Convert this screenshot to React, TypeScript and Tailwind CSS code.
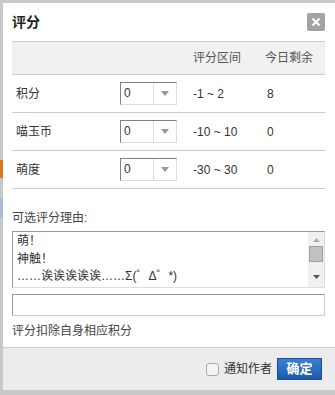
import React from 'react';

const rows = [
  { name: '积分', range: '-1 ~ 2', left: '8' },
  { name: '喵玉币', range: '-10 ~ 10', left: '0' },
  { name: '萌度', range: '-30 ~ 30', left: '0' },
];

const reasons = ['萌！', '神触！', '……诶诶诶诶诶……Σ(゜Δ゜*)'];

const Select = () => (
  <div className="flex h-[23px] w-[57px] border border-[#ddd] border-t-[#808080] border-l-[#808080] bg-white">
    <div className="flex-1 pl-[3px] leading-[21px] text-[#333]">0</div>
    <div className="flex w-[23px] items-center justify-center border-l border-[#ddd]">
      <svg width="8" height="5" viewBox="0 0 8 5">
        <path d="M0 0h8L4 5z" fill="#999" />
      </svg>
    </div>
  </div>
);

export default function App() {
  return (
    <div
      className="flex h-[395px] w-[335px] bg-[#c8c8c8] text-[12px] text-[#333]"
      style={{ fontFamily: '"Liberation Sans", "Noto Sans CJK SC", sans-serif' }}
    >
      {/* page behind the dialog */}
      <div className="flex w-[3px] flex-col">
        <div className="h-[160px] bg-[#c8c8c8]" />
        <div className="h-[18px] bg-[#d9781a]" />
        <div className="h-[20px] bg-[#c8c8c8]" />
        <div className="h-[20px] bg-[#a9bdd6]" />
        <div className="flex-1 bg-[#c8c8c8]" />
      </div>

      <div className="mt-[3px] flex h-[387px] flex-1 flex-col bg-white">
        <div className="flex-1 pl-[9px] pr-[10px]">
          {/* title */}
          <div className="flex h-[38px] items-center justify-between">
            <span className="text-[14px] font-bold text-[#222]">评分</span>
            <button className="flex h-[18px] w-[18px] items-center justify-center rounded-[2px] bg-[#a3a3a3]">
              <svg width="10" height="10" viewBox="0 0 10 10">
                <path d="M1.5 1.5l7 7M8.5 1.5l-7 7" stroke="#fff" strokeWidth="2.2" />
              </svg>
            </button>
          </div>

          {/* table */}
          <div className="flex h-[34px] items-center border-y border-[#ccc] bg-[#f1f1f1] text-[#555]">
            <div className="w-[181px]" />
            <div className="w-[72px]">评分区间</div>
            <div>今日剩余</div>
          </div>
          {rows.map((r) => (
            <div key={r.name} className="flex h-[38px] items-center border-b border-[#ccc]">
              <div className="w-[108px] pl-[4px]">{r.name}</div>
              <div className="w-[73px]">
                <Select />
              </div>
              <div className="w-[74px]">{r.range}</div>
              <div>{r.left}</div>
            </div>
          ))}

          {/* reasons */}
          <div className="mt-[21px] leading-[16px] text-[#444]">可选评分理由:</div>
          <div className="mt-[5px] flex h-[57px] border border-[#ddd] border-t-[#999] border-l-[#999]">
            <div className="flex-1 pl-[4px] pt-[1px] leading-[17.5px]">
              {reasons.map((t) => (
                <div key={t}>{t}</div>
              ))}
            </div>
            <div className="flex w-[16px] flex-col items-center bg-[#f0f0f0]">
              <svg className="mt-[6px]" width="7" height="4" viewBox="0 0 7 4">
                <path d="M0 4h7L3.5 0z" fill="#aaa" />
              </svg>
              <div className="mt-[4px] h-[16px] w-[14px] border border-[#a0a0a0] bg-[#c1c1c1]" />
              <div className="flex-1" />
              <svg className="mb-[8px]" width="7" height="4" viewBox="0 0 7 4">
                <path d="M0 0h7L3.5 4z" fill="#555" />
              </svg>
            </div>
          </div>
          <div className="mt-[6px] h-[22px] border border-[#ccc] border-t-[#999] border-l-[#999]" />
          <div className="mt-[5px] leading-[20px] text-[#444]">评分扣除自身相应积分</div>
        </div>

        {/* footer */}
        <div className="flex h-[43px] items-center justify-end border-t border-[#ccc] bg-[#ececec] pr-[13px]">
          <div className="h-[13px] w-[13px] rounded-[3px] border border-[#aaa] bg-[#f4f4f4]" />
          <span className="ml-[5px] mr-[5px] text-[12px] text-[#333]">通知作者</span>
          <button className="h-[22px] w-[45px] border border-[#1d4f94] bg-gradient-to-b from-[#3a7fd4] to-[#1f5ca9] text-[13px] font-bold text-white">
            确定
          </button>
        </div>
      </div>
    </div>
  );
}
